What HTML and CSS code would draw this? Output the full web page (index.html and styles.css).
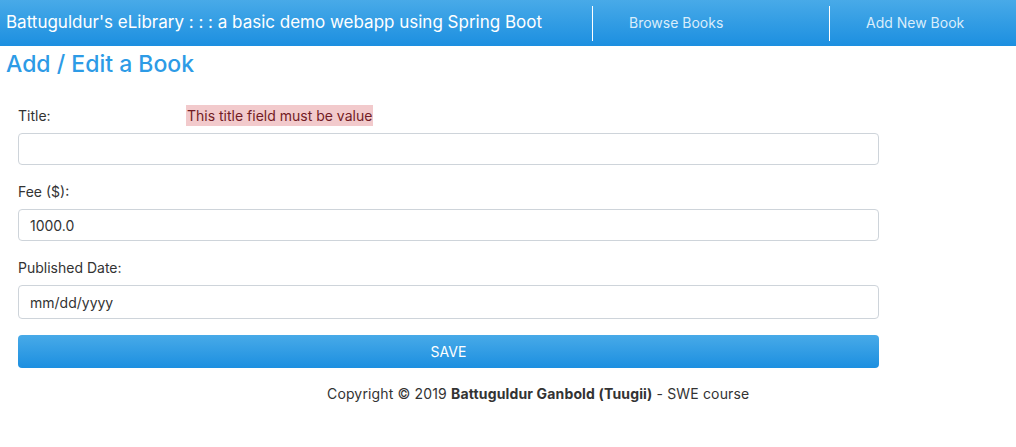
FILE: index.html
```html
<!DOCTYPE html>
<html>
<head>
<meta charset="utf-8">
<link rel="stylesheet" href="styles.css">
</head>
<body>
<header class="topbar">
  <div class="brand">Battuguldur's eLibrary : : : a basic demo webapp using Spring Boot</div>
  <nav class="nav">
    <a class="nav-item" href="#">Browse Books</a>
    <a class="nav-item" href="#">Add New Book</a>
  </nav>
</header>
<main class="content">
  <h2 class="page-title">Add / Edit a Book</h2>
  <form class="book-form">
    <div class="form-group">
      <div class="label-row">
        <label class="label label-title">Title:</label>
        <span class="error">This title field must be value</span>
      </div>
      <input class="input" type="text" value="">
    </div>
    <div class="form-group">
      <div class="label-row"><label class="label">Fee ($):</label></div>
      <input class="input" type="text" value="1000.0">
    </div>
    <div class="form-group">
      <div class="label-row"><label class="label">Published Date:</label></div>
      <div class="input input-date">mm/dd/yyyy</div>
    </div>
    <button class="save" type="button">SAVE</button>
  </form>
  <footer class="footer">Copyright © 2019 <b>Battuguldur Ganbold (Tuugii)</b> - SWE course</footer>
</main>
</body>
</html>
```

FILE: styles.css
```css
* { box-sizing: border-box; }
html, body { margin: 0; padding: 0; background: #fff; }
body {
  font-family: Inter, "Noto Sans", "Liberation Sans", sans-serif;
  color: #212529;
  font-size: 14px;
}
.topbar {
  height: 46px;
  display: flex;
  align-items: center;
  background: linear-gradient(to bottom, #48aae8, #1c8fe0);
  color: #fff;
}
.brand {
  flex: 1;
  padding-left: 6px;
  padding-bottom: 2px;
  font-size: 17px;
  white-space: nowrap;
}
.nav { display: flex; align-self: stretch; align-items: center; }
.nav-item {
  width: 237px;
  height: 35px;
  border-left: 1px solid #fff;
  padding-left: 36px;
  padding-bottom: 2px;
  display: flex;
  align-items: center;
  color: #d9edfb;
  text-decoration: none;
  font-size: 14px;
  white-space: nowrap;
}
.nav-item:last-child { width: 187px; }
.content { padding: 0; }
.page-title {
  margin: 4px 0 0 6px;
  font-size: 23px;
  font-weight: 500;
  color: #2d9be6;
  line-height: 28px;
}
.book-form {
  margin: 27px 0 0 18px;
  width: 861px;
}
.form-group { margin-bottom: 16px; }
.label-row {
  display: flex;
  height: 21px;
  align-items: center;
  margin-bottom: 7px;
}
.label { width: 168px; font-size: 14px; color: #333; }
.error {
  background: #f2cacc;
  color: #721c24;
  font-size: 14px;
  line-height: 21px;
  padding: 0 1px;
}
.input {
  display: block;
  width: 100%;
  height: 32px;
  border: 1px solid #ced4da;
  border-radius: 4px;
  padding: 0 11px;
  font-family: inherit;
  font-size: 14px;
  color: #333;
  background: #fff;
  outline: none;
}
.input-date { height: 34px; display: flex; align-items: center; }
.save {
  display: block;
  width: 100%;
  height: 33px;
  border: 0;
  border-radius: 4px;
  background: linear-gradient(to bottom, #48aae8, #1c8fe0);
  color: #fff;
  font-family: inherit;
  font-size: 14px;
  cursor: pointer;
}
.footer {
  margin-top: 17px;
  padding-left: 327px;
  font-size: 14px;
  letter-spacing: 0.15px;
  color: #333;
}
```
